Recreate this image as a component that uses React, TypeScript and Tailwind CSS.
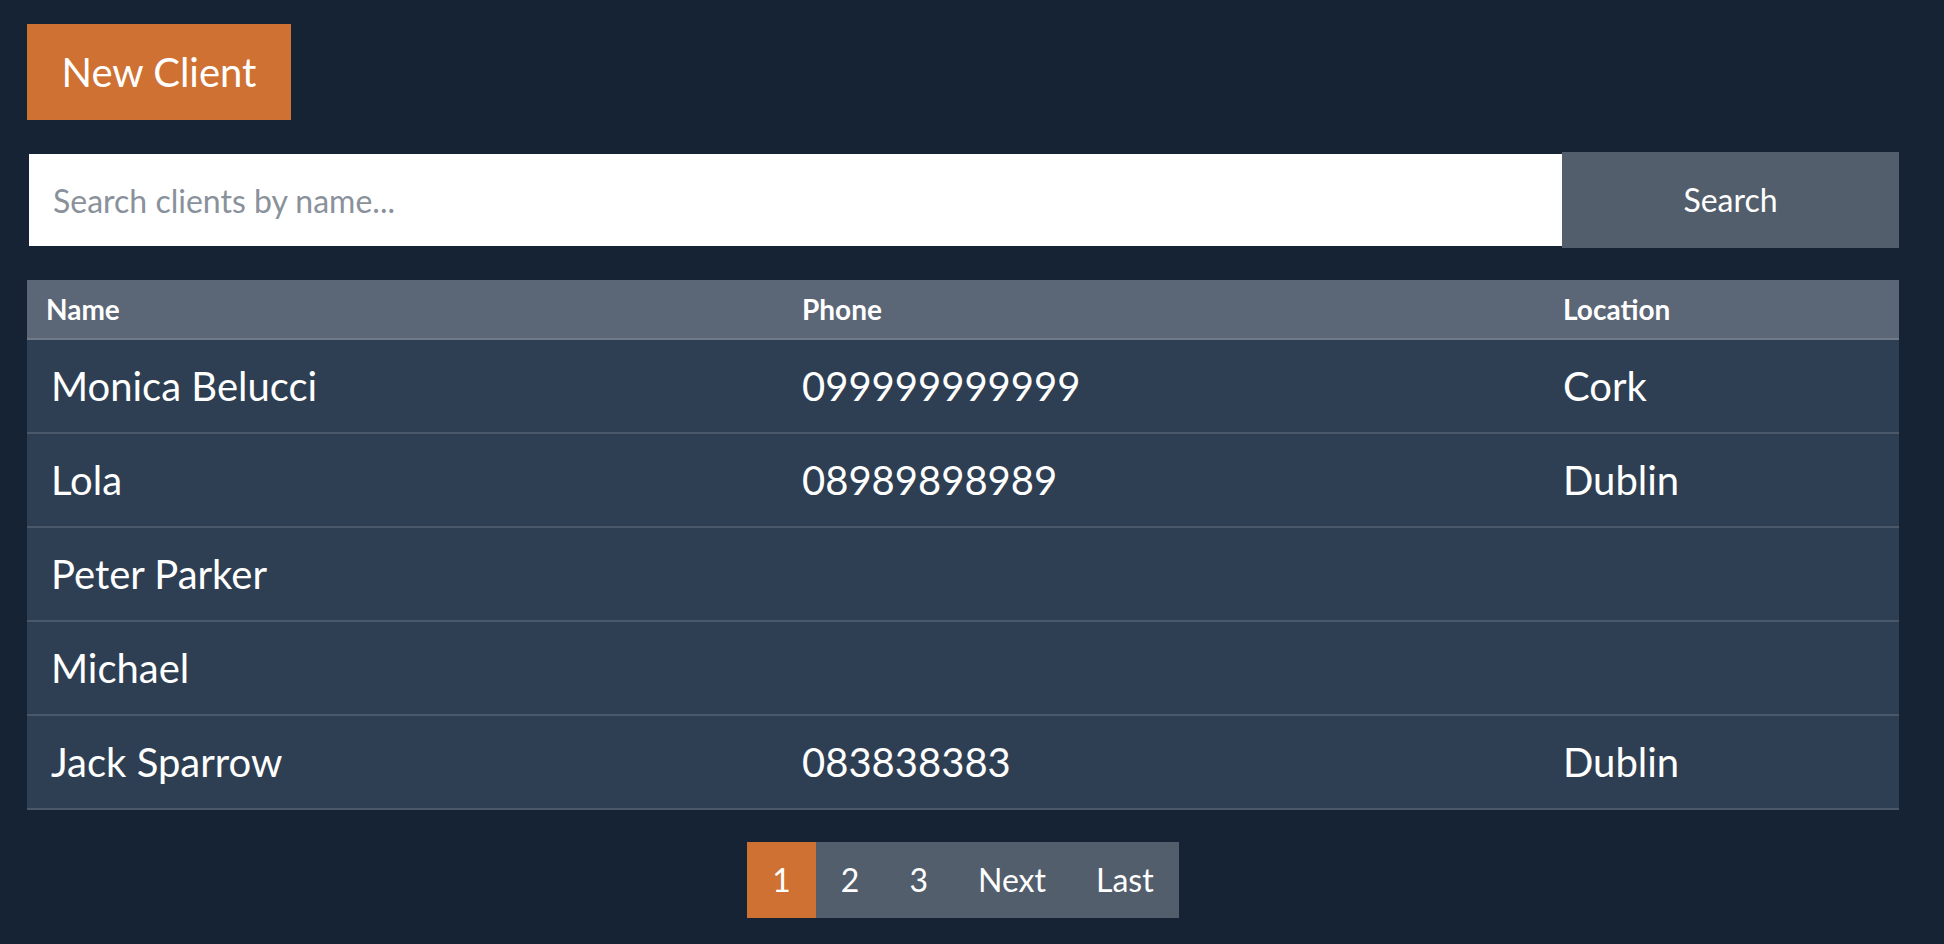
import React, { useState } from "react";

type Client = {
  name: string;
  phone: string;
  location: string;
};

const CLIENTS: Client[] = [
  { name: "Monica Belucci", phone: "099999999999", location: "Cork" },
  { name: "Lola", phone: "08989898989", location: "Dublin" },
  { name: "Peter Parker", phone: "", location: "" },
  { name: "Michael", phone: "", location: "" },
  { name: "Jack Sparrow", phone: "083838383", location: "Dublin" },
];

const PAGES = ["1", "2", "3", "Next", "Last"];

export default function ClientsPage() {
  const [query, setQuery] = useState("");
  const [page, setPage] = useState("1");

  return (
    <div
      className="min-h-screen bg-[#152334] pl-[27px] pr-[45px] pt-[24px] pb-8 text-white"
      style={{ fontFamily: "Lato, 'Open Sans', sans-serif" }}
    >
      <button className="h-[96px] w-[264px] bg-[#cf7133] text-[40px] leading-none text-white">
        New Client
      </button>

      <div className="mt-[32px] flex h-[96px]">
        <input
          value={query}
          onChange={(e) => setQuery(e.target.value)}
          placeholder="Search clients by name..."
          className="h-full flex-1 border-y-2 border-l-2 border-[#152334] bg-white pl-[24px] text-[32px] text-gray-800 outline-none placeholder:text-[#89919b]"
        />
        <button className="h-full w-[337px] bg-[#525e6c] text-[32px] text-white">Search</button>
      </div>

      <table className="mt-[32px] w-full table-fixed border-collapse">
        <colgroup>
          <col className="w-[756px]" />
          <col className="w-[761px]" />
          <col />
        </colgroup>
        <thead>
          <tr className="h-[59px] border-b-2 border-[#6f7a86] bg-[#5b6676]">
            <th className="pl-[19px] text-left text-[28px] font-bold">Name</th>
            <th className="pl-[19px] text-left text-[28px] font-bold">Phone</th>
            <th className="pl-[19px] text-left text-[28px] font-bold">Location</th>
          </tr>
        </thead>
        <tbody>
          {CLIENTS.map((c) => (
            <tr key={c.name} className="h-[94px] border-b-2 border-[#4a586a] bg-[#2f3f53]">
              <td className="pl-[24px] text-[40px]">{c.name}</td>
              <td className="pl-[19px] text-[40px]">{c.phone}</td>
              <td className="pl-[19px] text-[40px]">{c.location}</td>
            </tr>
          ))}
        </tbody>
      </table>

      <div className="mt-[32px] flex justify-center">
        <div className="flex h-[76px] bg-[#525e6c]">
          {PAGES.map((p) => (
            <button
              key={p}
              onClick={() => /^\d+$/.test(p) && setPage(p)}
              className={`h-full px-[25px] text-[32px] text-white ${
                page === p ? "bg-[#cf7133]" : ""
              }`}
            >
              {p}
            </button>
          ))}
        </div>
      </div>
    </div>
  );
}
